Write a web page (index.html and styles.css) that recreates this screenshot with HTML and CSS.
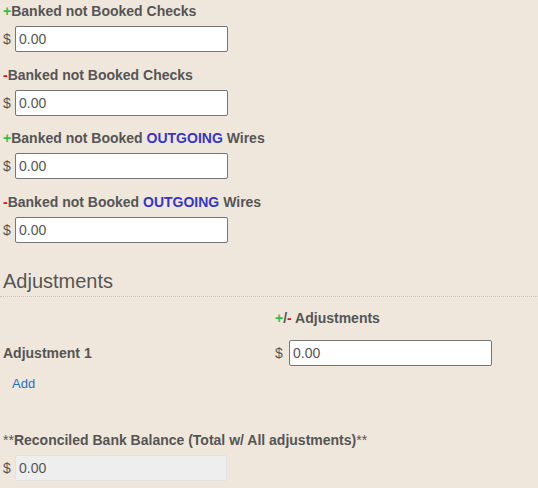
FILE: index.html
```html
<!DOCTYPE html>
<html>
<head>
<meta charset="utf-8">
<link rel="stylesheet" href="styles.css">
</head>
<body>
<div class="page">
  <div class="field">
    <label class="lbl"><span class="plus">+</span>Banked not Booked Checks</label>
    <div class="money"><span class="cur">$</span><input class="inp" type="text" value="0.00"></div>
  </div>
  <div class="field">
    <label class="lbl"><span class="minus">-</span>Banked not Booked Checks</label>
    <div class="money"><span class="cur">$</span><input class="inp" type="text" value="0.00"></div>
  </div>
  <div class="field">
    <label class="lbl"><span class="plus">+</span>Banked not Booked <span class="out">OUTGOING</span> Wires</label>
    <div class="money"><span class="cur">$</span><input class="inp" type="text" value="0.00"></div>
  </div>
  <div class="field">
    <label class="lbl"><span class="minus">-</span>Banked not Booked <span class="out">OUTGOING</span> Wires</label>
    <div class="money"><span class="cur">$</span><input class="inp" type="text" value="0.00"></div>
  </div>

  <h3 class="section">Adjustments</h3>

  <div class="adj-grid">
    <div></div>
    <div class="lbl adj-head"><span class="plus">+</span>/<span class="minus">-</span> Adjustments</div>
    <div class="lbl adj-name">Adjustment 1</div>
    <div class="money"><span class="cur">$</span><input class="inp adj-inp" type="text" value="0.00"></div>
  </div>

  <a class="add" href="#">Add</a>

  <div class="field total">
    <label class="lbl"><span class="ast">**</span>Reconciled Bank Balance (Total w/ All adjustments)<span class="ast">**</span></label>
    <div class="money"><span class="cur">$</span><input class="inp dis" type="text" value="0.00" disabled></div>
  </div>
</div>
</body>
</html>
```

FILE: styles.css
```css
html, body {
  margin: 0;
  padding: 0;
  background: #f0e7dc;
}
body {
  font-family: "Liberation Sans", Arial, sans-serif;
  font-size: 13px;
  color: #555;
}
.page {
  padding: 2px 3px 0 3px;
}
.field {
  margin-bottom: 13.67px;
}
.lbl {
  display: block;
  font-weight: bold;
  font-size: 14px;
  line-height: 18px;
  color: #555;
  margin-bottom: 6px;
}
.plus { color: #2fbf45; }
.minus { color: #e01010; }
.out { color: #3535c8; }
.ast { font-weight: normal; }
.money {
  display: flex;
  align-items: center;
}
.cur {
  font-size: 14px;
  width: 12px;
  color: #555;
}
.inp {
  box-sizing: border-box;
  width: 213px;
  height: 26px;
  margin: 0;
  padding: 2px 3px;
  border: 1px solid #767676;
  border-radius: 2px;
  background: #fff;
  font-family: "Liberation Sans", Arial, sans-serif;
  font-size: 14px;
  color: #555;
}
.inp.adj-inp {
  width: 203px;
}
.inp.dis {
  width: 212px;
  background: #eeeeee;
  border-color: #e2e2e2;
}
.section {
  margin: 26px -3px 0 -3px;
  padding: 0 3px 3px 3px;
  font-size: 20px;
  font-weight: normal;
  line-height: 24px;
  color: #555;
  border-bottom: 1px dotted #c4c4c4;
}
.adj-grid {
  display: grid;
  grid-template-columns: 272px 1fr;
  row-gap: 12.5px;
  align-items: center;
  margin-top: 12.5px;
}
.adj-head { margin: 0; }
.adj-name { margin: 0; }
.adj-grid .money .cur { width: 14px; }
.add {
  display: block;
  width: max-content;
  margin: 9.5px 0 0 9px;
  color: #1a6fc4;
  text-decoration: none;
  font-size: 13px;
  line-height: 18px;
}
.total {
  margin-top: 37.5px;
}
```
